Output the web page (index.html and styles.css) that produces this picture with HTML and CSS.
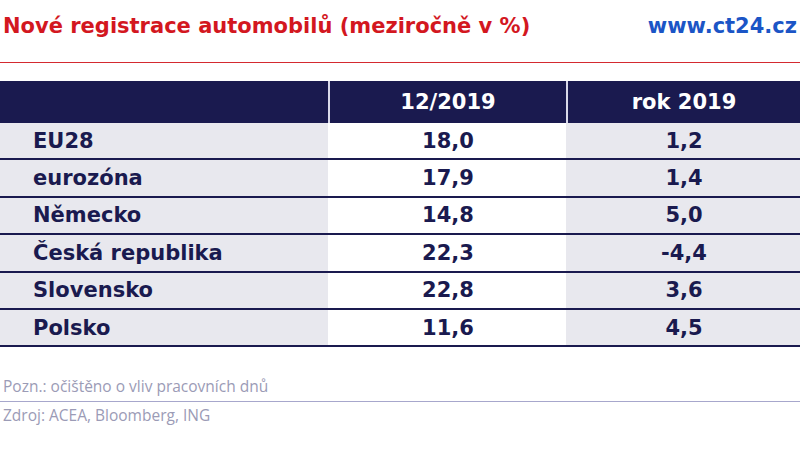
FILE: index.html
```html
<!DOCTYPE html>
<html lang="cs">
<head>
<meta charset="utf-8">
<link rel="stylesheet" href="styles.css">
</head>
<body>
<div class="page">
  <header class="top">
    <h1 class="title">Nové registrace automobilů (meziročně v %)</h1>
    <div class="site">www.ct24.cz</div>
  </header>
  <div class="rule"></div>
  <table class="data">
    <thead>
      <tr>
        <th class="c1"></th>
        <th class="c2">12/2019</th>
        <th class="c3">rok 2019</th>
      </tr>
    </thead>
    <tbody>
      <tr><td class="c1">EU28</td><td class="c2">18,0</td><td class="c3">1,2</td></tr>
      <tr><td class="c1">eurozóna</td><td class="c2">17,9</td><td class="c3">1,4</td></tr>
      <tr><td class="c1">Německo</td><td class="c2">14,8</td><td class="c3">5,0</td></tr>
      <tr><td class="c1">Česká republika</td><td class="c2">22,3</td><td class="c3">-4,4</td></tr>
      <tr><td class="c1">Slovensko</td><td class="c2">22,8</td><td class="c3">3,6</td></tr>
      <tr><td class="c1">Polsko</td><td class="c2">11,6</td><td class="c3">4,5</td></tr>
    </tbody>
  </table>
  <footer class="notes">
    <div class="note">Pozn.: očištěno o vliv pracovních dnů</div>
    <div class="source">Zdroj: ACEA, Bloomberg, ING</div>
  </footer>
</div>
</body>
</html>
```

FILE: styles.css
```css
html, body {
  margin: 0;
  padding: 0;
  background: #ffffff;
}
.page {
  width: 800px;
  height: 449px;
  overflow: hidden;
  font-family: "DejaVu Sans", Verdana, sans-serif;
}
.top {
  display: flex;
  justify-content: space-between;
  align-items: center;
  height: 52px;
  padding: 0 3px 0 3px;
}
.title {
  margin: 0;
  font-size: 21px;
  font-weight: bold;
  color: #d3171f;
}
.site {
  font-size: 21px;
  font-weight: bold;
  color: #1b55c6;
}
.rule {
  margin-top: 10px;
  height: 1px;
  background: #d42a30;
}
.data {
  margin-top: 18px;
  width: 800px;
  border-collapse: collapse;
  table-layout: fixed;
}
.data th {
  height: 42px;
  padding: 0;
  background: #1a1a4f;
  color: #ffffff;
  font-size: 21px;
  font-weight: bold;
  text-align: center;
}
.data th.c2, .data th.c3 {
  border-left: 2px solid #d9d9ea;
}
.data th.c1 { width: 328px; }
.data th.c2 { width: 236px; }
.data td {
  height: 35.4px;
  padding: 0;
  border-bottom: 2px solid #1a1a4f;
  color: #1a1a4f;
  font-size: 21px;
  font-weight: bold;
  text-align: center;
}
.data td.c1 {
  text-align: left;
  padding-left: 33px;
  background: #e8e8ee;
}
.data td.c2 {
  background: #ffffff;
  border-left: 2px solid #ffffff;
}
.data td.c3 {
  background: #e8e8ee;
  border-left: 2px solid #e8e8ee;
}
.notes {
  margin-top: 28px;
  font-family: "Open Sans", "Noto Sans", sans-serif;
  font-size: 15.5px;
  color: #9b9bb6;
}
.note {
  padding: 0 0 4px 3px;
  border-bottom: 1px solid #a7a7cc;
}
.source {
  padding: 2px 0 0 3px;
}
```
